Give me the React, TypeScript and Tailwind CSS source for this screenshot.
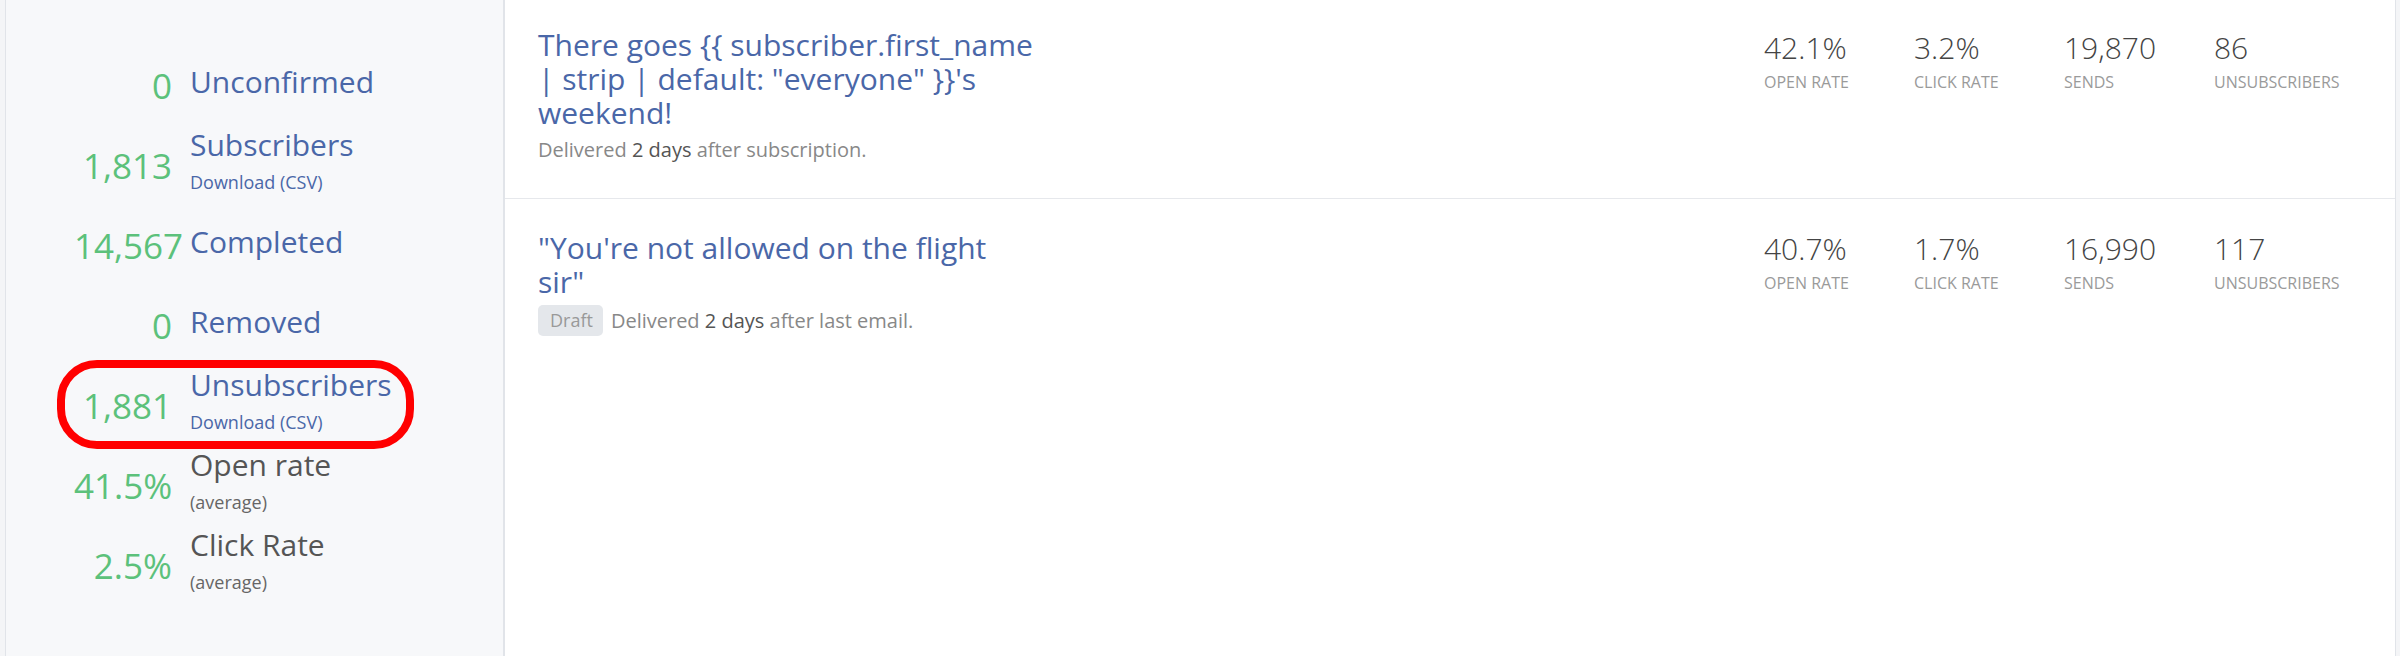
import React from "react";

interface SideStat {
  value: string;
  label: string;
  sub?: string;
  link?: boolean;
}

interface Email {
  title: string;
  draft?: boolean;
  delay: string;
  after: string;
  openRate: string;
  clickRate: string;
  sends: string;
  unsubs: string;
}

const sideStats: SideStat[] = [
  { value: "0", label: "Unconfirmed", link: true },
  { value: "1,813", label: "Subscribers", sub: "Download (CSV)", link: true },
  { value: "14,567", label: "Completed", link: true },
  { value: "0", label: "Removed", link: true },
  { value: "1,881", label: "Unsubscribers", sub: "Download (CSV)", link: true },
  { value: "41.5%", label: "Open rate", sub: "(average)" },
  { value: "2.5%", label: "Click Rate", sub: "(average)" },
];

const emails: Email[] = [
  {
    title: 'There goes {{ subscriber.first_name | strip | default: "everyone" }}\'s weekend!',
    delay: "2 days",
    after: "after subscription.",
    openRate: "42.1%",
    clickRate: "3.2%",
    sends: "19,870",
    unsubs: "86",
  },
  {
    title: '"You\'re not allowed on the flight sir"',
    draft: true,
    delay: "2 days",
    after: "after last email.",
    openRate: "40.7%",
    clickRate: "1.7%",
    sends: "16,990",
    unsubs: "117",
  },
];

const Metric = ({ value, label }: { value: string; label: string }) => (
  <div className="w-[150px] shrink-0">
    <div className="text-[30px] leading-[30px] font-light text-[#444] whitespace-nowrap">{value}</div>
    <div className="mt-[9px] text-[16px] leading-[20px] text-[#9a9a9a] whitespace-nowrap">{label}</div>
  </div>
);

const SideRow = ({ stat }: { stat: SideStat }) => (
  <div className="flex h-[80px] items-center">
    <div className="ml-[68px] w-[98px] shrink-0 text-right text-[35px] leading-[40px] text-[#5cc17b] whitespace-nowrap">
      {stat.value}
    </div>
    <div className={stat.sub ? "mb-[9px] ml-[18px] flex flex-col" : "mb-[8px] ml-[18px] flex flex-col"}>
      <span
        className={
          stat.link
            ? "text-[30px] leading-[34px] text-[#4a67a8]"
            : "text-[30px] leading-[34px] text-[#555]"
        }
      >
        {stat.label}
      </span>
      {stat.sub && (
        <span
          className={
            stat.link
              ? "mt-[6px] text-[18px] leading-[28px] text-[#4a67a8]"
              : "mt-[6px] text-[18px] leading-[28px] text-[#666]"
          }
        >
          {stat.sub}
        </span>
      )}
    </div>
  </div>
);

export default function App() {
  return (
    <div className="flex h-[656px] w-[2400px] bg-[#f4f5f7] pl-[5px] pr-[4px] font-['Open_Sans',sans-serif]">
      {/* Sidebar */}
      <aside className="relative w-[500px] shrink-0 border-l border-r-2 border-[#e1e4e9] bg-[#f7f8fa] pt-[46px]">
        {sideStats.map((s) => (
          <SideRow key={s.label} stat={s} />
        ))}
        {/* annotation */}
        <div className="pointer-events-none absolute left-[51px] top-[360px] h-[89px] w-[357px] rounded-[40px] border-[8px] border-[#ff0000]" />
      </aside>

      {/* Emails */}
      <main className="flex-1 border-r border-[#e1e4e9] bg-white">
        {emails.map((e, i) => (
          <div key={i} className={i === 0 ? "flex h-[199px] border-b border-[#e6e8ec]" : "flex"}>
            <div className={i === 0 ? "flex-1 pl-[33px] pt-[28px]" : "flex-1 pl-[33px] pt-[32px]"}>
              <div className="w-[495px] text-[30px] leading-[34px] text-[#4a67a8]">{e.title}</div>
              <div className="mt-[6px] flex items-center text-[20px] leading-[27px] text-[#888]">
                {e.draft && (
                  <span className="mr-[8px] rounded-[5px] bg-[#e4e7eb] py-[2px] pl-[12px] pr-[10px] text-[18px] leading-[27px] text-[#999]">
                    Draft
                  </span>
                )}
                <span>
                  Delivered <span className="text-[#555]">{e.delay}</span> {e.after}
                </span>
              </div>
            </div>
            <div className={i === 0 ? "flex w-[631px] shrink-0 pt-[33px]" : "flex w-[631px] shrink-0 pt-[35px]"}>
              <Metric value={e.openRate} label="OPEN RATE" />
              <Metric value={e.clickRate} label="CLICK RATE" />
              <Metric value={e.sends} label="SENDS" />
              <Metric value={e.unsubs} label="UNSUBSCRIBERS" />
            </div>
          </div>
        ))}
      </main>
    </div>
  );
}
